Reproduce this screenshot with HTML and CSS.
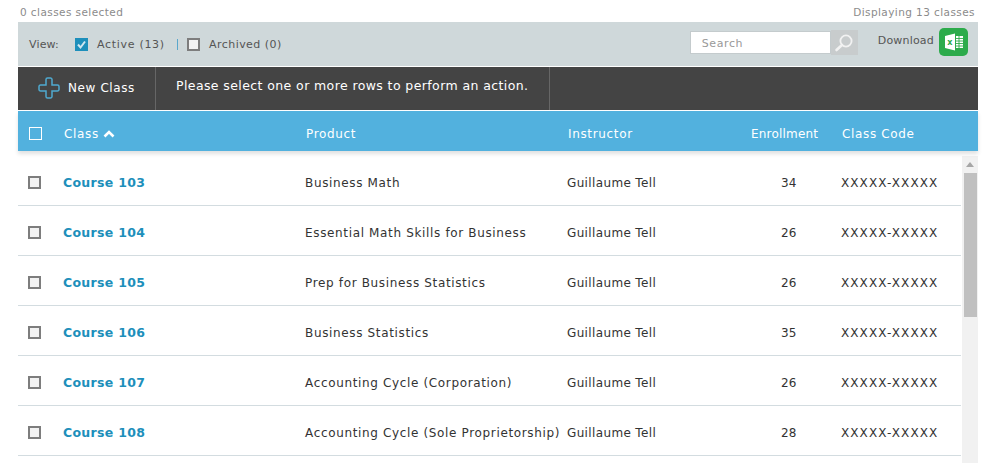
FILE: index.html
```html
<!DOCTYPE html>
<html lang="en">
<head>
<meta charset="utf-8">
<title>Classes</title>
<link rel="stylesheet" href="styles.css">
</head>
<body>
<div class="page">
  <div class="status"><span>0 classes selected</span><span>Displaying 13 classes</span></div>
  <div class="filters">
    <span class="view-label">View:</span>
    <span class="box box-on"><svg width="13" height="13" viewBox="0 0 13 13"><path d="M3 6.500l2.500 3L10 3.500" fill="none" stroke="#cfe6f0" stroke-width="2"/></svg></span>
    <span class="filter-active">Active (13)</span>
    <span class="divider"></span>
    <span class="box box-off"></span>
    <span class="filter-archived">Archived (0)</span>
    <div class="search">
      <span class="search-input">Search</span>
      <span class="search-btn"><svg width="20" height="20" viewBox="0 0 20 20"><circle cx="12" cy="8" r="5.600" fill="none" stroke="#f2f2f2" stroke-width="1.800"/><path d="M8 12l-5.500 5" stroke="#f2f2f2" stroke-width="2.600" stroke-linecap="round"/></svg></span>
    </div>
    <span class="download">Download</span>
    <span class="excel"><svg width="20" height="18" viewBox="0 0 20 18"><path d="M1 3l10-2.500v17L1 15z" fill="#fff"/><path d="M12 3h7v12h-7z" fill="#fff"/><path d="M12 5.500h7M12 8h7M12 10.500h7M12 13h7M15 3v12" stroke="#2cab4b" stroke-width=".9"/><text x="3.200" y="12" class="excel-x">x</text></svg></span>
  </div>
  <div class="actions">
    <div class="new-class">
      <svg width="22" height="22" viewBox="0 0 22 22"><path d="M8 2.500a1.500 1.500 0 0 1 1.500-1.500h3a1.500 1.500 0 0 1 1.500 1.500V8h5.500a1.500 1.500 0 0 1 1.500 1.500v3a1.500 1.500 0 0 1-1.500 1.500H14v5.500a1.500 1.500 0 0 1-1.500 1.500h-3A1.500 1.500 0 0 1 8 19.500V14H2.500A1.500 1.500 0 0 1 1 12.500v-3A1.500 1.500 0 0 1 2.500 8H8z" fill="none" stroke="#4fa9cf" stroke-width="1.500"/></svg>
      <span class="new-label">New Class</span>
    </div>
    <div class="message">Please select one or more rows to perform an action.</div>
  </div>
  <div class="thead">
    <span class="head-box-cell"><span class="head-box"></span></span>
    <span class="sort">Class <svg width="12" height="8" viewBox="0 0 12 8"><path d="M1.500 6.500L6 2l4.500 4.500" fill="none" stroke="#fff" stroke-width="2.600"/></svg></span>
    <span>Product</span>
    <span>Instructor</span>
    <span class="head-enroll">Enrollment</span>
    <span>Class Code</span>
  </div>
  <div class="body">
    <div class="rows">
      <div class="row"><span class="cell-box"><span class="box box-off"></span></span><a class="course">Course 103</a><span class="product">Business Math</span><span class="instructor">Guillaume Tell</span><span class="num">34</span><span class="code">XXXXX-XXXXX</span></div>
      <div class="row"><span class="cell-box"><span class="box box-off"></span></span><a class="course">Course 104</a><span class="product">Essential Math Skills for Business</span><span class="instructor">Guillaume Tell</span><span class="num">26</span><span class="code">XXXXX-XXXXX</span></div>
      <div class="row"><span class="cell-box"><span class="box box-off"></span></span><a class="course">Course 105</a><span class="product">Prep for Business Statistics</span><span class="instructor">Guillaume Tell</span><span class="num">26</span><span class="code">XXXXX-XXXXX</span></div>
      <div class="row"><span class="cell-box"><span class="box box-off"></span></span><a class="course">Course 106</a><span class="product">Business Statistics</span><span class="instructor">Guillaume Tell</span><span class="num">35</span><span class="code">XXXXX-XXXXX</span></div>
      <div class="row"><span class="cell-box"><span class="box box-off"></span></span><a class="course">Course 107</a><span class="product">Accounting Cycle (Corporation)</span><span class="instructor">Guillaume Tell</span><span class="num">26</span><span class="code">XXXXX-XXXXX</span></div>
      <div class="row"><span class="cell-box"><span class="box box-off"></span></span><a class="course">Course 108</a><span class="product">Accounting Cycle (Sole Proprietorship)</span><span class="instructor">Guillaume Tell</span><span class="num">28</span><span class="code">XXXXX-XXXXX</span></div>
    </div>
    <div class="scrollbar"><span class="arrow"></span><span class="thumb"></span></div>
  </div>
</div>
</body>
</html>
```
FILE: styles.css
```css
* { box-sizing: border-box; }
html, body { margin: 0; height: 463px; overflow: hidden; background: #fff; }
body { font-family: "DejaVu Sans", Verdana, sans-serif; font-size: 12px; color: #333; }
.page { height: 463px; padding: 0 11px 0 18px; overflow: hidden; }
.status { height: 22px; padding: 3px 3px 0 2px; display: flex; justify-content: space-between; font-size: 10.5px; line-height: 18px; color: #8b8b8b; letter-spacing: .42px; }
.filters { height: 44px; background: #cfd8da; display: flex; align-items: center; font-size: 11px; color: #555; padding: 0 10px 0 11px; letter-spacing: .15px; }
.view-label { width: 46px; }
.box { width: 13px; height: 13px; display: block; }
.box-on { background: #1d8fbb; }
.box-off { border: 2px solid #7d7d7d; background: #f2f2f2; }
.filter-active { margin-left: 9px; width: 80px; letter-spacing: .7px; }
.divider { width: 1px; height: 11px; background: #5aa7cc; }
.filters .box-off { margin-left: 9px; }
.filter-archived { margin-left: 9px; flex: 1; letter-spacing: .45px; }
.search { display: flex; margin-top: -2px; }
.search-input { width: 141px; height: 23px; border: 1px solid #c4cbcd; background: #fff; color: #999; padding-left: 11px; line-height: 23px; letter-spacing: .6px; }
.search-btn { width: 27px; height: 25px; background: #c8cccd; display: flex; align-items: center; justify-content: center; margin-top: -1px; }
.download { margin-left: 20px; margin-top: -7px; letter-spacing: .2px; }
.excel { width: 29px; height: 28px; border-radius: 5px; background: #2cab4b; margin-left: 5px; margin-top: -4px; display: flex; align-items: center; justify-content: center; }
.excel-x { font-size: 8px; font-weight: 700; fill: #2cab4b; }
.actions { height: 45px; border-top: 1px solid #fff; border-bottom: 1px solid #fff; background: #444; display: flex; color: #fff; font-size: 12px; }
.new-class { width: 138px; border-right: 1px solid #666; display: flex; align-items: center; gap: 8px; padding: 0 0 2px 20px; }
.new-label { letter-spacing: .6px; }
.message { width: 394px; border-right: 1px solid #666; padding: 11px 0 0 20px; line-height: 16px; font-size: 12.5px; white-space: nowrap; letter-spacing: .4px; }
.thead { height: 40px; padding-top: 5px; background: #52b1de; box-shadow: 0 3px 4px rgba(0,0,0,.12); color: #fff; display: grid; grid-template-columns: 46px 242px 262px 183px 91px 1fr; align-items: center; font-size: 12px; letter-spacing: .65px; position: relative; }
.head-box-cell { padding-left: 11px; display: flex; }
.head-box { width: 13px; height: 13px; border: 1.5px solid #fff; }
.sort { display: flex; align-items: center; gap: 4px; }
.head-enroll { letter-spacing: .2px; }
.body { display: flex; padding-top: 5px; }
.rows { width: 944px; }
.row { height: 50px; padding-top: 4px; border-bottom: 1px solid #d3dce0; display: grid; grid-template-columns: 45px 242px 262px 214px 60px 1fr; align-items: center; font-size: 12px; color: #333; white-space: nowrap; }
.cell-box { padding-left: 10px; }
.course { font-weight: 700; font-size: 12.5px; letter-spacing: .3px; color: #1d8fbb; }
.product { letter-spacing: .65px; }
.instructor { letter-spacing: .36px; }
.code { letter-spacing: 1.09px; }
.scrollbar { margin-left: 1px; width: 16px; height: 307px; background: #f1f1f1; display: flex; flex-direction: column; align-items: center; }
.arrow { width: 0; height: 0; border: 4px solid transparent; border-top: 0; border-bottom: 5px solid #a6a6a6; margin: 6px 0 6px; }
.thumb { width: 13px; height: 144px; background: #c0c0c0; }
```
